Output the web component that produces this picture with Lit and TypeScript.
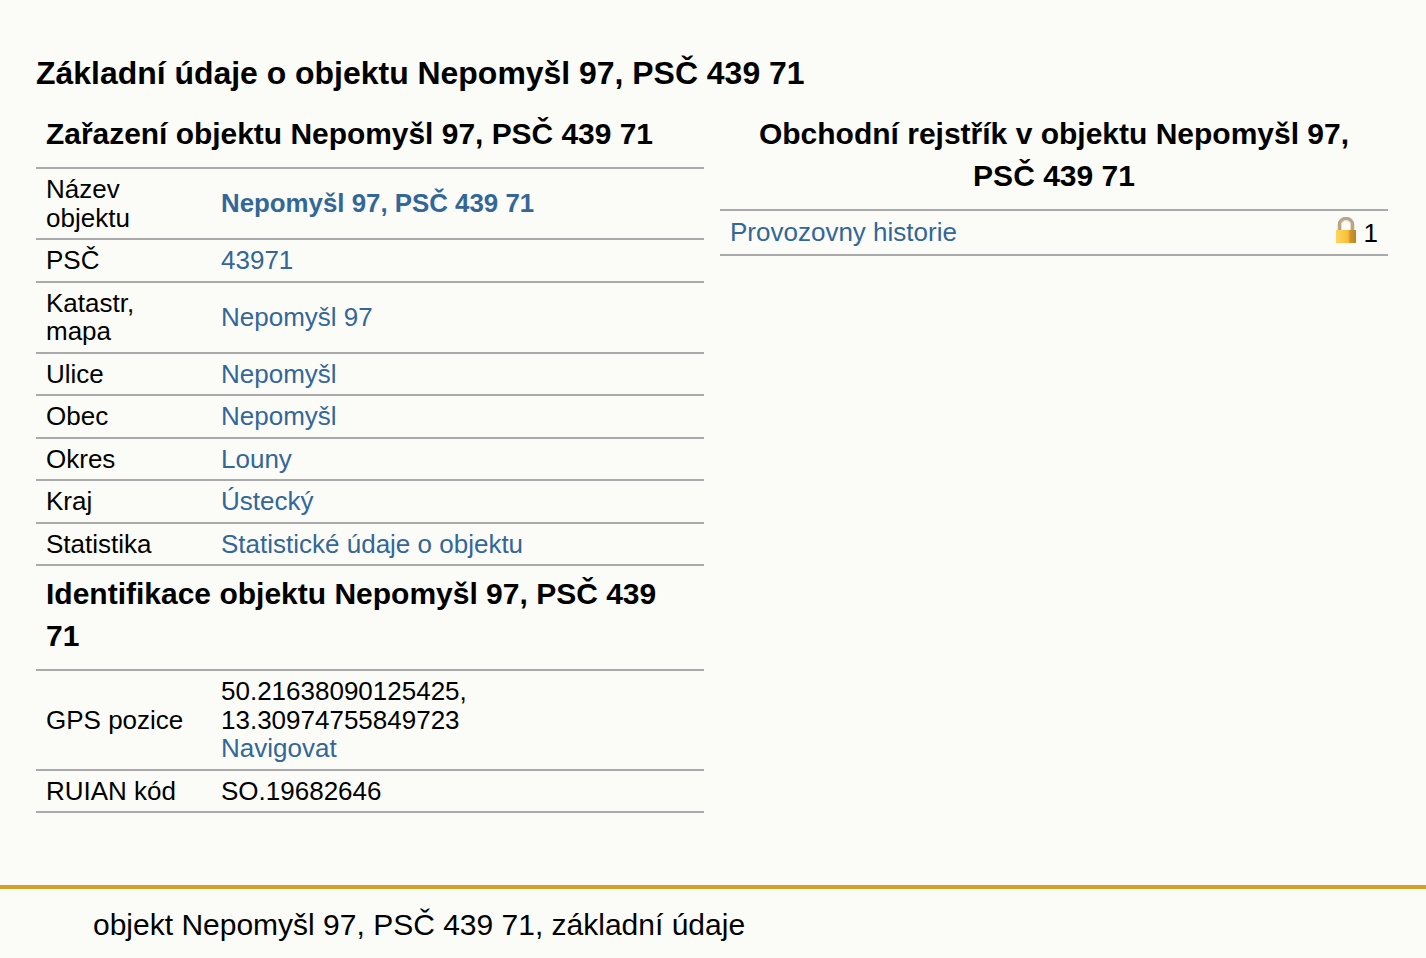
import { LitElement, html, css } from "lit";
import { customElement } from "lit/decorators.js";

const rows: [string, unknown][] = [
  ["Název objektu", html`<a class="b" href="#">Nepomyšl 97, PSČ 439 71</a>`],
  ["PSČ", html`<a href="#">43971</a>`],
  ["Katastr, mapa", html`<a href="#">Nepomyšl 97</a>`],
  ["Ulice", html`<a href="#">Nepomyšl</a>`],
  ["Obec", html`<a href="#">Nepomyšl</a>`],
  ["Okres", html`<a href="#">Louny</a>`],
  ["Kraj", html`<a href="#">Ústecký</a>`],
  ["Statistika", html`<a href="#">Statistické údaje o objektu</a>`],
];

@customElement("app-root")
export class AppRoot extends LitElement {
  static styles = css`
    :host {
      display: block;
      min-height: 958px;
      background: #fbfcf7;
      color: #000;
      font-family: "Liberation Sans", Arial, sans-serif;
      font-size: 26px;
      line-height: 28.5px;
    }
    main { padding: 0 38px 72px 36px; }
    h1 { margin: 0; padding-top: 52px; font-size: 31.95px; line-height: 42px; font-weight: bold; }
    .cols { display: grid; grid-template-columns: 668px 668px; column-gap: 16px; align-items: start; margin-top: 12px; }
    table { width: 100%; border-collapse: collapse; table-layout: fixed; }
    col.kc { width: 175px; }
    th.h { font-size: 30px; line-height: 42px; font-weight: bold; padding: 6.5px 10px 12.5px; text-align: left; }
    th.first { font-size: 29.93px; }
    th.c { text-align: center; }
    td { padding: 6px 10px; border-top: 2px solid #aaa; border-bottom: 2px solid #aaa; vertical-align: middle; }
    a { color: #336699; text-decoration: none; }
    a.b { font-weight: bold; font-size: 25.85px; }
    .n { display: flex; justify-content: space-between; align-items: center; min-height: 31px; }
    .lock { display: inline-flex; align-items: center; gap: 8px; }
    .one { position: relative; top: 1px; }
    svg { display: block; margin-bottom: 5px; }
    footer { border-top: 4px solid #d4a026; padding: 19px 0 0 93px; font-size: 30px; line-height: 34px; height: 73px; box-sizing: border-box; }
  `;
  render() {
    return html`
      <main>
        <h1>Základní údaje o objektu Nepomyšl 97, PSČ 439 71</h1>
        <div class="cols">
          <table>
            <colgroup><col class="kc" /><col /></colgroup>
            <tbody>
              <tr><th class="h first" colspan="2">Zařazení objektu Nepomyšl 97, PSČ 439 71</th></tr>
              ${rows.map(([k, v]) => html`<tr><td>${k}</td><td>${v}</td></tr>`)}
              <tr><th class="h" colspan="2">Identifikace objektu Nepomyšl 97, PSČ 439 71</th></tr>
              <tr><td>GPS pozice</td><td>50.21638090125425, 13.30974755849723<br /><a href="#">Navigovat</a></td></tr>
              <tr><td>RUIAN kód</td><td>SO.19682646</td></tr>
            </tbody>
          </table>
          <table>
            <tbody>
              <tr><th class="h c">Obchodní rejstřík v objektu Nepomyšl 97, PSČ 439 71</th></tr>
              <tr><td>
                <div class="n">
                  <a href="#">Provozovny historie</a>
                  <span class="lock">
                    <svg width="20" height="26" viewBox="0 0 20 26">
                      <defs>
                        <linearGradient id="g" x1="0" x2="1" y1="0" y2="0">
                          <stop offset="0" stop-color="#fdd660" /><stop offset="0.6" stop-color="#fbbd35" /><stop offset="0.72" stop-color="#d0942c" /><stop offset="1" stop-color="#c08426" />
                        </linearGradient>
                      </defs>
                      <path d="M3.5 14V7.5a6.5 6 0 0 1 13 0V14" fill="none" stroke="#b9a58a" stroke-width="3.5" />
                      <path d="M5.5 14V7.5a4.5 4 0 0 1 9 0V14" fill="none" stroke="#e6dccb" stroke-width="1" />
                      <rect x="0" y="13" width="20" height="13" fill="url(#g)" />
                    </svg>
                    <span class="one">1</span>
                  </span>
                </div>
              </td></tr>
            </tbody>
          </table>
        </div>
      </main>
      <footer>objekt Nepomyšl 97, PSČ 439 71, základní údaje</footer>
    `;
  }
}
